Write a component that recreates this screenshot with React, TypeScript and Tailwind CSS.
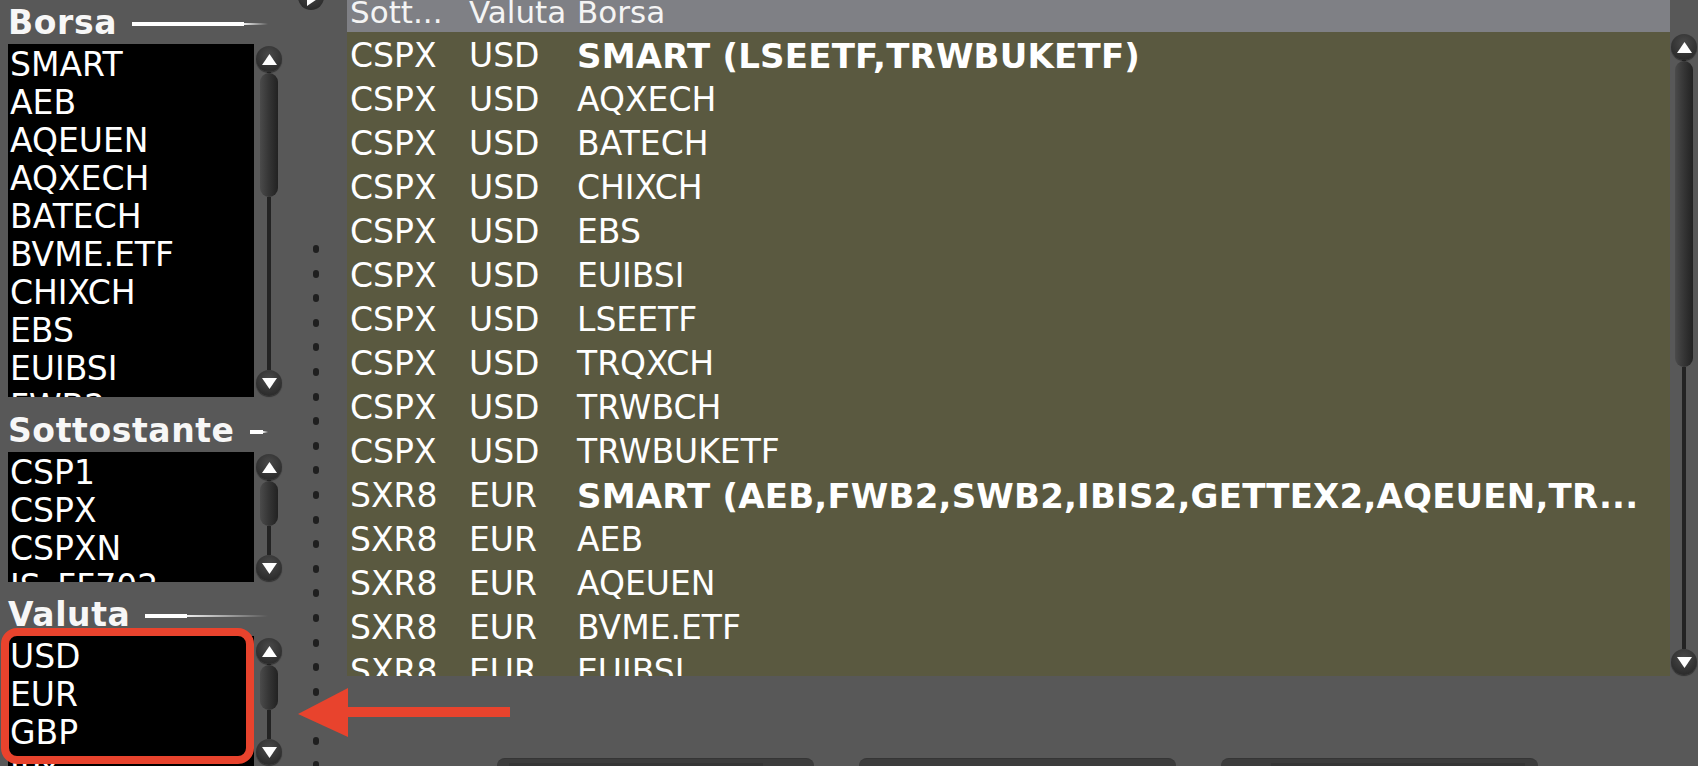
import React from "react";

const FONT = { fontFamily: '"DejaVu Sans", Verdana, sans-serif' };

function RoundBtn({ dir }: { dir: "up" | "down" }) {
  return (
    <div className="w-[26px] h-[26px] shrink-0 rounded-full bg-[radial-gradient(circle_at_50%_35%,#4a4a4a_0%,#2e2e2e_70%,#262626_100%)] shadow-[0_1px_1px_rgba(0,0,0,0.45)] flex items-center justify-center">
      <svg width="15" height="11" viewBox="0 0 15 11">
        <polygon points={dir === "up" ? "7.5,0 15,11 0,11" : "0,0 15,0 7.5,11"} fill="#ffffff" />
      </svg>
    </div>
  );
}

function ScrollCol({ thumb, width }: { thumb: number; width: string }) {
  return (
    <div className={`${width} h-full flex flex-col items-center pt-[2px] pb-[1px]`}>
      <RoundBtn dir="up" />
      <div className="w-[4px] h-[1px] bg-[#222]" />
      <div
        className="w-[18px] shrink-0 rounded-full bg-gradient-to-r from-[#4b4b4b] via-[#353535] to-[#222222]"
        style={{ height: thumb }}
      />
      <div className="w-[4px] flex-1 bg-[#232323]" />
      <RoundBtn dir="down" />
    </div>
  );
}

function Heading({
  label,
  h,
  thick,
}: {
  label: string;
  h: string;
  thick: string;
}) {
  return (
    <div className={`${h} flex items-end pb-[6px]`}>
      <div className="flex items-center h-[32px] w-[260px]">
        <span className="text-[33px] leading-none font-bold tracking-[0.6px] text-[#f7f7f7] whitespace-nowrap">{label}</span>
        <div className="ml-[15px] flex-1 mt-[4px] flex items-center">
          <div className={`${thick} h-[4px] bg-white shrink-0`} />
          <div className="flex-1 h-[2px] bg-gradient-to-r from-white/90 to-white/0" />
        </div>
      </div>
    </div>
  );
}

function ListBox({ items, h, thumb }: { items: string[]; h: string; thumb: number }) {
  return (
    <div className={`flex ${h}`}>
      <div className="w-[246px] h-full bg-black overflow-hidden pt-[2px] pl-[2px]">
        {items.map((it, i) => (
          <div key={i} className="text-[33px] leading-[38px] text-white whitespace-nowrap">
            {it}
          </div>
        ))}
      </div>
      <ScrollCol thumb={thumb} width="w-[30px]" />
    </div>
  );
}

const rows: [string, string, string, boolean][] = [
  ["CSPX", "USD", "SMART (LSEETF,TRWBUKETF)", true],
  ["CSPX", "USD", "AQXECH", false],
  ["CSPX", "USD", "BATECH", false],
  ["CSPX", "USD", "CHIXCH", false],
  ["CSPX", "USD", "EBS", false],
  ["CSPX", "USD", "EUIBSI", false],
  ["CSPX", "USD", "LSEETF", false],
  ["CSPX", "USD", "TRQXCH", false],
  ["CSPX", "USD", "TRWBCH", false],
  ["CSPX", "USD", "TRWBUKETF", false],
  ["SXR8", "EUR", "SMART (AEB,FWB2,SWB2,IBIS2,GETTEX2,AQEUEN,TR...", true],
  ["SXR8", "EUR", "AEB", false],
  ["SXR8", "EUR", "AQEUEN", false],
  ["SXR8", "EUR", "BVME.ETF", false],
  ["SXR8", "EUR", "EUIBSI", false],
];

export default function App() {
  const dots = Array.from({ length: 22 });
  return (
    <div
      className="relative w-[1698px] h-[766px] overflow-hidden bg-[#585858] flex text-white"
      style={FONT}
    >
      {/* left panel */}
      <div className="w-[284px] shrink-0 pl-[8px] flex flex-col">
        <Heading label="Borsa" h="h-[44px]" thick="w-[112px]" />
        <ListBox
          h="h-[353px]"
          thumb={124}
          items={["SMART", "AEB", "AQEUEN", "AQXECH", "BATECH", "BVME.ETF", "CHIXCH", "EBS", "EUIBSI", "FWB2"]}
        />
        <Heading label="Sottostante" h="h-[55px]" thick="w-[13px]" />
        <ListBox h="h-[130px]" thumb={45} items={["CSP1", "CSPX", "CSPXN", "IS_FF702"]} />
        <Heading label="Valuta" h="h-[54px]" thick="w-[42px]" />
        <ListBox h="h-[130px]" thumb={45} items={["USD", "EUR", "GBP", "JPY"]} />
      </div>

      {/* splitter */}
      <div className="relative w-[63px] shrink-0 flex flex-col items-center pt-[245px] gap-[16.6px]">
        <div className="absolute left-[14px] top-[-16px] w-[26px] h-[26px] rounded-full bg-[radial-gradient(circle_at_50%_35%,#4a4a4a_0%,#2e2e2e_70%,#262626_100%)] flex items-center justify-center">
          <svg width="11" height="15" viewBox="0 0 11 15" className="mt-[2px] ml-[2px]">
            <polygon points="0,0 11,7.5 0,15" fill="#ffffff" />
          </svg>
        </div>
        {dots.map((_, i) => (
          <div key={i} className="w-[6px] h-[8px] rounded-full bg-[#1f1f1f] shrink-0" />
        ))}
      </div>

      {/* table area */}
      <div className="flex-1 flex flex-col">
        <div className="flex h-[32px] shrink-0">
          <div className="w-[1323px] h-full bg-[#7f8085] flex pl-[3px] text-[31px] leading-[24px] text-[#f4f4f4] overflow-hidden">
            <div className="w-[119px] whitespace-nowrap">Sott...</div>
            <div className="w-[108px] whitespace-nowrap">Valuta</div>
            <div className="whitespace-nowrap">Borsa</div>
          </div>
        </div>
        <div className="flex h-[644px] shrink-0">
          <div className="w-[1323px] h-full bg-[#5a5940] overflow-hidden pt-[2px] pl-[3px]">
            {rows.map(([a, b, c, bold], i) => (
              <div key={i} className="flex h-[44px] items-center text-[33px] leading-[44px] whitespace-nowrap">
                <div className="w-[119px]">{a}</div>
                <div className="w-[108px]">{b}</div>
                <div className={bold ? "font-bold text-[34px] tracking-[0.2px]" : ""}>{c}</div>
              </div>
            ))}
          </div>
          <ScrollCol thumb={306} width="w-[28px]" />
        </div>
        <div className="flex-1 flex items-start pt-[82px] pl-[150px] gap-[45px]">
          <div className="w-[317px] h-[20px] rounded-t-[8px] bg-[#3c3c3c] border-t border-[#353535]" />
          <div className="w-[317px] h-[20px] rounded-t-[8px] bg-[#3c3c3c] border-t border-[#353535]" />
          <div className="w-[317px] h-[20px] rounded-t-[8px] bg-[#3c3c3c] border-t border-[#353535]" />
        </div>
      </div>

      {/* annotation: red highlight box */}
      <div className="absolute left-[1px] top-[628px] w-[253px] h-[136px] border-[8px] border-[#e8432d] rounded-[16px] pointer-events-none" />
      {/* annotation: red arrow */}
      <svg className="absolute left-[290px] top-[680px] pointer-events-none" width="230" height="66" viewBox="290 680 230 66">
        <polygon points="298,714 348,688 348,737" fill="#e8432d" />
        <rect x="346" y="707" width="164" height="10" fill="#e8432d" />
      </svg>
    </div>
  );
}
